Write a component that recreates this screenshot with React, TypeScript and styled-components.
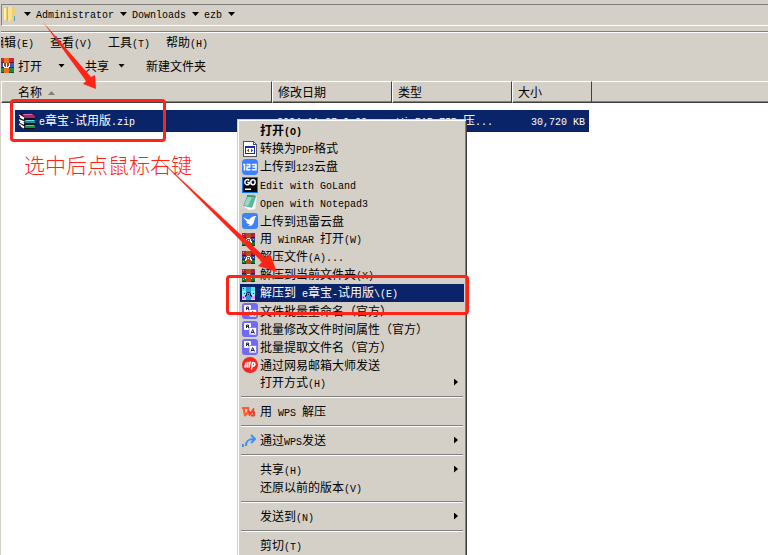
import React from "react";
import styled, { createGlobalStyle, css } from "styled-components";

const face = "#d4d0c8";
const navy = "#0a246a";
const red = "#ff2417";

const Global = createGlobalStyle`
  * { box-sizing: border-box; }
  body { margin: 0; background: #fff; }
  button { font: inherit; color: inherit; border: 0; background: none; padding: 0; }
`;

const Window = styled.main`
  position: relative;
  min-height: 100vh;
  overflow: hidden;
  border-left: 1px solid ${face};
  background: #fff;
  color: #000;
  font: 12px/18px "Noto Sans CJK SC", sans-serif;
  white-space: nowrap;
`;

const Half = styled.span`
  font-family: "Liberation Mono", monospace;
  font-size: 10px;
  white-space: pre;
`;

/* Latin runs are set at half the width of a Chinese character. */
function Label({ children }: { children: string }) {
  return (
    <span>
      {children.split(/([\x20-\x7e]+)/).map((run, i) =>
        i % 2 ? <Half key={i}>{run}</Half> : run
      )}
    </span>
  );
}

const Chrome = styled.header`
  background: ${face};
`;

const AddressRow = styled.div`
  padding: 4px 0 5px;
  border-bottom: 1px solid #808080;
`;

const AddressBar = styled.nav`
  display: flex;
  align-items: center;
  height: 22px;
  padding-bottom: 2px;
  border: 1px solid #808080;
  border-right: 0;
  border-bottom-color: #fff;
`;

const Crumb = styled.button`
  display: flex;
  align-items: center;
  gap: 6px;
  margin-right: 5px;
`;

const Caret = styled.span`
  width: 7px;
  height: 4px;
  background: #000;
  clip-path: polygon(0 0, 100% 0, 50% 100%);
`;

const FolderSlot = styled.span`
  display: flex;
  width: 22px;
`;

const MenuBar = styled.nav`
  display: flex;
  align-items: flex-start;
  gap: 16px;
  height: 22px;
  margin-left: -9px;
  border-top: 1px solid #fff;
`;

const ToolBar = styled.div`
  display: flex;
  align-items: center;
  height: 27px;
  padding-bottom: 4px;
`;

const Tool = styled.button<{ $after?: number }>`
  display: flex;
  align-items: center;
  margin-right: ${(p) => p.$after ?? 0}px;
`;

const ToolCaret = styled(Caret)<{ $before: number }>`
  margin-left: ${(p) => p.$before}px;
`;

const ToolIcon = styled.span`
  display: flex;
  width: 19px;
  margin-left: -2px;
`;

const Files = styled.table`
  width: 100%;
  table-layout: fixed;
  border-collapse: separate;
  border-spacing: 0;
`;

const Col = styled.col<{ $w?: number }>`
  width: ${(p) => (p.$w ? `${p.$w}px` : "auto")};
`;

const Head = styled.th<{ $first?: boolean }>`
  height: 22px;
  padding: 0 0 0 ${(p) => (p.$first ? 16 : 5)}px;
  background: ${face};
  border-top: 1px solid #fff;
  border-left: 1px solid #fff;
  border-right: 1px solid #404040;
  border-bottom: 1px solid #404040;
  box-shadow: inset 0 -1px #808080;
  font-weight: normal;
  text-align: left;
  &:last-child { border-left: 0; border-right: 0; }
`;

const SortMark = styled.span`
  display: inline-block;
  width: 7px;
  height: 4px;
  margin-left: 6px;
  vertical-align: 2px;
  background: #808080;
  clip-path: polygon(50% 0, 100% 100%, 0 100%);
`;

const Cell = styled.td`
  padding: 7px 0 0;
`;

const Fill = styled.div<{ $kind?: "name" | "size" }>`
  display: flex;
  align-items: center;
  height: 22px;
  padding-left: 5px;
  overflow: hidden;
  background: ${navy};
  color: #fff;
  ${(p) => p.$kind === "name" && css`margin-left: 14px; padding-left: 4px; gap: 3px;`}
  ${(p) => p.$kind === "size" && css`margin-right: 3px; padding-right: 4px; justify-content: flex-end;`}
`;

const ContextMenu = styled.div`
  position: absolute;
  top: 119px;
  left: 236px;
  width: 230px;
  padding: 1px;
  background: ${face};
  border: 1px solid ${face};
  border-right-color: #404040;
  border-bottom: 0;
  box-shadow: inset 1px 1px #fff, inset -1px 0 #808080;
`;

const Items = styled.div`
  padding: 1px;
`;

const Item = styled.button<{ $active?: boolean; $bold?: boolean }>`
  display: flex;
  align-items: center;
  width: 100%;
  height: 18px;
  text-align: left;
  font-weight: ${(p) => (p.$bold ? "bold" : "normal")};
  ${(p) => p.$active && css`background: ${navy}; color: #fff;`}
`;

const IconSlot = styled.span<{ $small?: boolean }>`
  display: flex;
  align-items: center;
  justify-content: ${(p) => (p.$small ? "flex-start" : "center")};
  width: 20px;
  height: 18px;
  padding-left: ${(p) => (p.$small ? 2 : 0)}px;
`;

const SubArrow = styled.span`
  width: 4px;
  height: 7px;
  margin: 0 6px 2px auto;
  background: #000;
  clip-path: polygon(0 0, 100% 50%, 0 100%);
`;

const Divider = styled.hr`
  height: 2px;
  margin: 4px 1px 5px;
  border: 0;
  border-top: 1px solid #808080;
  border-bottom: 1px solid #fff;
`;

const Frame = styled.div<{ $x: number; $y: number; $w: number; $h: number }>`
  position: absolute;
  left: ${(p) => p.$x}px;
  top: ${(p) => p.$y}px;
  width: ${(p) => p.$w}px;
  height: ${(p) => p.$h}px;
  border: 3px solid ${red};
  border-radius: 4px;
  pointer-events: none;
`;

const Note = styled.p`
  position: absolute;
  left: 23px;
  top: 150px;
  margin: 0;
  color: ${red};
  font-size: 21px;
  line-height: 28px;
  font-weight: 300;
`;

const Arrows = styled.svg`
  position: absolute;
  left: -1px;
  top: 0;
  pointer-events: none;
`;

function Rar() {
  return (
    <svg width="15" height="15" viewBox="0 0 15 15" shapeRendering="crispEdges">
      <path fill="#c02850" d="M0 0h15v5H0z" />
      <path fill="#3c58b8" d="M0 5h15v5H0z" />
      <path fill="#148c3c" d="M0 10h15v5H0z" />
      <path fill="#5c2038" d="M0 4h15v1H0z" />
      <path fill="#202c60" d="M0 9h15v1H0z" />
      <path fill="#0c5428" d="M0 14h15v1H0z" />
      <path fill="#f07020" d="M5 0h5v15H5z" />
      <path fill="#b84010" d="M5 5h5v5H5z" />
      <path fill="#fff" d="M4 5h1v4H4zM10 5h1v4h-1zM5 8h1v2H5zM9 8h1v2H9zM7 5h1v4H7zM6 9h3v1H6z" />
    </svg>
  );
}

function SmallRar({ inverted }: { inverted?: boolean }) {
  const c = inverted
    ? { top: "#58e0e8", mid: "#78e8ff", low: "#e898f8", strap: "#2898d8", edge: "#e8d0ff", clasp: "#0c2848", dot: "#183090" }
    : { top: "#a82048", mid: "#304898", low: "#107838", strap: "#b84818", edge: "#302028", clasp: "#fff", dot: "#e0a890" };
  return (
    <svg width="13" height="13" viewBox="0 0 13 13" shapeRendering="crispEdges">
      <path fill={c.top} d="M0 0h13v4H0z" />
      <path fill={c.mid} d="M0 4h13v5H0z" />
      <path fill={c.low} d="M0 9h13v4H0z" />
      <path fill={c.edge} d="M0 4h13v1H0zM0 8h13v1H0zM0 12h13v1H0z" />
      <path fill={c.dot} d="M1 1h1v1H1zM2 6h1v1H2zM11 6h1v1h-1zM1 10h1v1H1z" />
      <path fill={c.strap} d="M4 0h5v13H4z" />
      <path fill={c.clasp} d="M5 5h3v1H5zM4 6h1v3H4zM8 6h1v3H8zM3 8h1v2H3zM9 8h1v2H9zM6 7h1v1H6z" />
    </svg>
  );
}

function Books() {
  return (
    <svg width="17" height="16" viewBox="0 0 17 16">
      <path fill="#111" d="M0 1 3 0h11l2 3v13H5L1 14z" />
      <path fill="#a32878" d="m3 1 10-.5L16 3v2H6z" />
      <path fill="#df72ac" d="m4 1 9 .2 1 .8H5z" />
      <path fill="#168aa5" d="M6 7h10v3H7L5 9z" />
      <path fill="#77d5db" d="M7 7h8v1H7z" />
      <path fill="#168848" d="M6 12h10v3H6z" />
      <path fill="#63d583" d="M7 12h8v1H7z" />
      <path stroke="#fff" strokeWidth="1.4" fill="none" d="m0 2 5 3M1 4l4 2M0 7l5 2M1 9l4 2M0 11l5 3M2 13l3 2" />
    </svg>
  );
}

function Folder() {
  return (
    <svg width="14" height="16" viewBox="0 0 14 16">
      <path fill="#e9ce6b" d="M1 1h6v13H1z" />
      <path fill="#fff0a8" d="M2 2h2v12H2z" />
      <path fill="#d8b048" d="M5 1h5l1 1v12l-6 1z" />
      <path fill="#f6e294" d="m6 1 4-1v14l-4 2z" />
      <path fill="#ecd078" d="M10 2h3v13h-3z" />
      <path fill="#4aa3d4" d="M12 10h1v5h-1z" />
    </svg>
  );
}

function Pdf() {
  return (
    <svg width="14" height="16" viewBox="0 0 14 16" shapeRendering="crispEdges">
      <path fill="#fff" stroke="#555" d="M.5.5h10l3 3v12H.5z" />
      <path fill="none" stroke="#555" d="M10.500 0v3.500h3" />
      <path fill="#fff" stroke="#183088" d="M2.500 5.500h9v7h-9z" />
      <path fill="#1830a0" d="M2 5h10v2H2z" />
      <path fill="#d92824" d="M4 9h1v-1h1v3H5v-1H4z" />
      <path fill="#2854d8" d="M8 8h1v1h1v1H9v1H8z" />
    </svg>
  );
}

function Cloud123() {
  return (
    <svg width="16" height="16" viewBox="0 0 16 16">
      <rect width="16" height="16" rx="4" fill="#3c80ff" />
      <path fill="none" stroke="#fff" strokeWidth="1.500" d="M1 5.500h1.500v6M4.500 5.500h3.200v2.400H5v2.900h3.500M9.800 5.500h4.200v5.300H9.800M10.500 8h3" />
    </svg>
  );
}

function GoLand() {
  return (
    <svg width="16" height="16" viewBox="0 0 16 16">
      <rect x=".5" y=".5" width="15" height="15" fill="#080808" stroke="#087cfa" />
      <path fill="none" stroke="#fff" strokeWidth="1.500" d="M7.200 3.500C6 2 2.800 2.300 2.800 5.200s3.500 3.200 4.400 1.600V5.500H5.300" />
      <ellipse cx="11" cy="5.200" rx="2.200" ry="2.500" fill="none" stroke="#fff" strokeWidth="1.500" />
      <path fill="#fff" d="M3 11.500h6V13H3z" />
    </svg>
  );
}

function Notepad() {
  return (
    <svg width="15" height="16" viewBox="0 0 15 16">
      <path fill="#e6efea" d="m11 1 3 1-2 12-9-2z" />
      <path fill="#58b89c" d="m4 1 9 .5L9 13 0 11z" />
      <path fill="#98d8c4" d="m5 2 4 .3L5 11l-4-1z" />
      <path fill="#2d8975" d="m4 0 9 .5v1.300L4 1.500z" />
      <path fill="#fafafa" d="m0 11 9 2 4-9-1 10-6 1z" />
    </svg>
  );
}

function Bird() {
  return (
    <svg width="16" height="16" viewBox="0 0 16 16">
      <rect width="16" height="16" rx="3" fill="#3f82f7" />
      <path fill="#fff" d="M1.500 4c2.500 2 4.500 2.500 6 2.500C8.500 4 11 3 14.500 3L13 5l-1 4c-1 3-3 4-6 4l2-2c-2 0-3-.5-4-2h2C4 8 2.500 6.500 1.500 4z" />
    </svg>
  );
}

function Rename() {
  return (
    <svg width="16" height="16" viewBox="0 0 16 16">
      <rect width="16" height="16" rx="3" fill="#716bf4" />
      <rect x="2" y="2" width="7" height="7" rx="1" fill="#fff" />
      <rect x="7" y="6.500" width="7.500" height="7.500" rx="1" fill="#fff" stroke="#716bf4" strokeWidth=".7" />
      <path fill="none" stroke="#24204f" d="M4.500 7V4h2v3M4.500 5.500h2M9 12.500l1.700-4 1.800 4M9.500 11.500h2.500" />
    </svg>
  );
}

function Mail() {
  return (
    <svg width="16" height="16" viewBox="0 0 16 16">
      <circle cx="8" cy="8" r="8" fill="#f42525" />
      <path fill="none" stroke="#fff" strokeWidth="1.500" strokeLinecap="round" d="m4 6-1 4M6 5.500l-1 4.500M8.200 5l-1.200 5M10.500 5.500 9.500 12M10.500 6c3-1.500 3.500 3 0 3.300" />
    </svg>
  );
}

function Wps() {
  return (
    <svg width="13" height="10" viewBox="0 0 13 10">
      <path fill="none" stroke="#ff5a28" strokeWidth="2" strokeLinejoin="round" d="M0 1h6.500L6 4M1.500 1 3 8.500 7 4" />
      <path fill="none" stroke="#f0402c" strokeWidth="2" strokeLinejoin="round" d="M7 3.500 7.500 8 12 1.500M9.500 5H12v3.500H9" />
    </svg>
  );
}

function Share() {
  return (
    <svg width="14" height="14" viewBox="0 0 14 14">
      <path fill="#3d91ef" d="M0 10h2v3H0z" />
      <path fill="none" stroke="#3d91ef" strokeWidth="2" d="M4 12c0-5 2-7 8-7M9 1l4 4-4 4" />
    </svg>
  );
}

type Entry = {
  text: string;
  icon?: React.ReactNode;
  small?: boolean;
  sub?: boolean;
  active?: boolean;
  bold?: boolean;
};

const groups: Entry[][] = [
  [
    { text: "打开(O)", bold: true },
    { text: "转换为PDF格式", icon: <Pdf /> },
    { text: "上传到123云盘", icon: <Cloud123 /> },
    { text: "Edit with GoLand", icon: <GoLand /> },
    { text: "Open with Notepad3", icon: <Notepad /> },
    { text: "上传到迅雷云盘", icon: <Bird /> },
    { text: "用 WinRAR 打开(W)", icon: <SmallRar />, small: true },
    { text: "解压文件(A)...", icon: <SmallRar />, small: true },
    { text: "解压到当前文件夹(X)", icon: <SmallRar />, small: true },
    { text: "解压到 e章宝-试用版\\(E)", icon: <SmallRar inverted />, small: true, active: true },
    { text: "文件批量重命名（官方）", icon: <Rename /> },
    { text: "批量修改文件时间属性（官方）", icon: <Rename /> },
    { text: "批量提取文件名（官方）", icon: <Rename /> },
    { text: "通过网易邮箱大师发送", icon: <Mail /> },
    { text: "打开方式(H)", sub: true },
  ],
  [{ text: "用 WPS 解压", icon: <Wps />, small: true }],
  [{ text: "通过WPS发送", icon: <Share />, small: true, sub: true }],
  [{ text: "共享(H)", sub: true }, { text: "还原以前的版本(V)" }],
  [{ text: "发送到(N)", sub: true }],
  [{ text: "剪切(T)" }],
];

export default function App() {
  return (
    <>
      <Global />
      <Window>
        <Chrome>
          <AddressRow>
            <AddressBar aria-label="路径">
              <FolderSlot><Folder /></FolderSlot>
              <Crumb aria-label="展开"><Caret /></Crumb>
              {["Administrator", "Downloads", "ezb"].map((name) => (
                <Crumb key={name}><Label>{name}</Label><Caret /></Crumb>
              ))}
            </AddressBar>
          </AddressRow>
          <MenuBar>
            {["编辑(E)", "查看(V)", "工具(T)", "帮助(H)"].map((name) => (
              <button key={name}><Label>{name}</Label></button>
            ))}
          </MenuBar>
          <ToolBar>
            <Tool $after={20}><ToolIcon><Rar /></ToolIcon>打开<ToolCaret $before={16} /></Tool>
            <Tool $after={21}>共享<ToolCaret $before={9} /></Tool>
            <Tool>新建文件夹</Tool>
          </ToolBar>
        </Chrome>
        <Files>
          <colgroup>
            <Col $w={271} /><Col $w={120} /><Col $w={120} /><Col $w={80} /><Col />
          </colgroup>
          <thead>
            <tr>
              <Head $first>名称<SortMark /></Head>
              <Head>修改日期</Head>
              <Head>类型</Head>
              <Head>大小</Head>
              <Head aria-label="空" />
            </tr>
          </thead>
          <tbody>
            <tr>
              <Cell><Fill $kind="name"><Books /><Label>e章宝-试用版.zip</Label></Fill></Cell>
              <Cell><Fill><Label>2024-11-27 9:28</Label></Fill></Cell>
              <Cell><Fill><Label>WinRAR ZIP 压...</Label></Fill></Cell>
              <Cell><Fill $kind="size"><Label>30,720 KB</Label></Fill></Cell>
              <Cell />
            </tr>
          </tbody>
        </Files>
        <ContextMenu role="menu">
          <Items>
            {groups.map((group, g) => (
              <React.Fragment key={g}>
                {g > 0 && <Divider />}
                {group.map((entry) => (
                  <Item key={entry.text} role="menuitem" $active={entry.active} $bold={entry.bold}>
                    <IconSlot $small={entry.small}>{entry.icon}</IconSlot>
                    <Label>{entry.text}</Label>
                    {entry.sub && <SubArrow />}
                  </Item>
                ))}
              </React.Fragment>
            ))}
          </Items>
        </ContextMenu>
        <Frame $x={9} $y={99} $w={156} $h={43} />
        <Frame $x={225} $y={275} $w={243} $h={40} />
        <Note>选中后点鼠标右键</Note>
        <Arrows width="480" height="320" viewBox="0 0 480 320" fill={red}>
          <path d="m43 22 48 55 4-2 1 14-13-5 3-3z" />
          <path d="m155 155 111 103 4-4 7 18-19-6 4-4z" />
        </Arrows>
      </Window>
    </>
  );
}
